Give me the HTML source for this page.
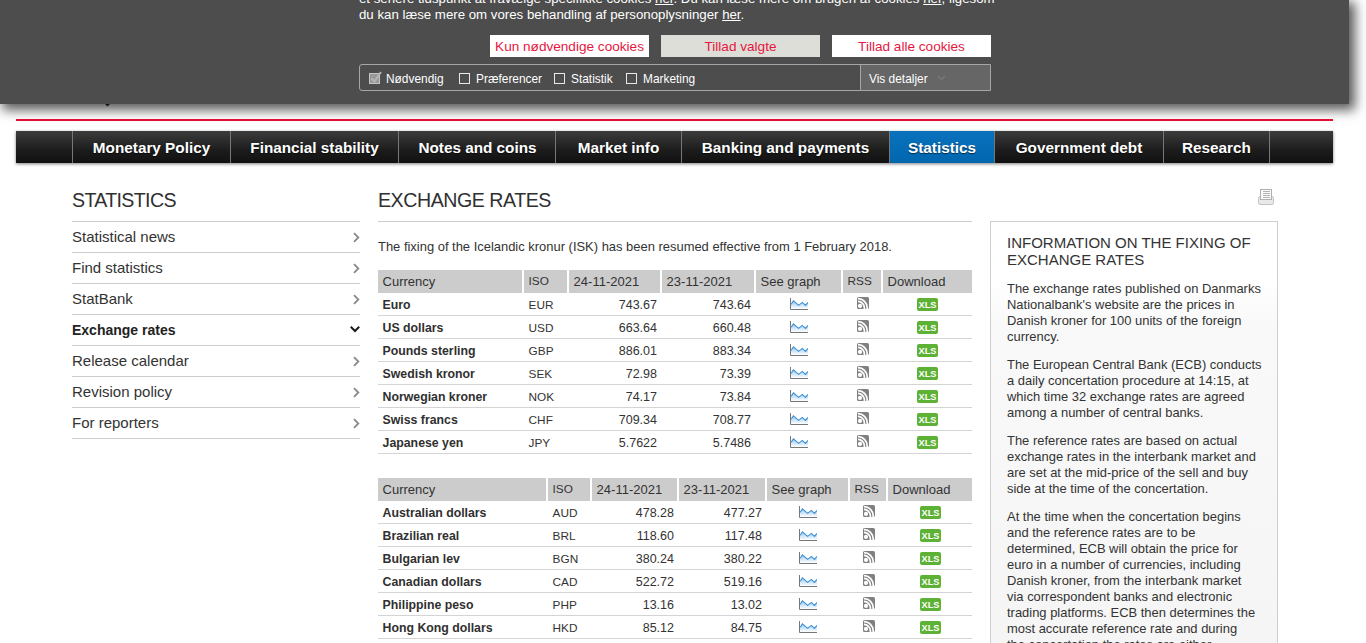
<!DOCTYPE html>
<html><head><meta charset="utf-8"><title>Exchange rates</title>
<style>
*{box-sizing:border-box;margin:0;padding:0}
html,body{width:1366px;height:643px;overflow:hidden;background:#fff}
body{font-family:"Liberation Sans",sans-serif;color:#333;position:relative;font-size:13px}
a{color:inherit}
/* cookie banner */
#ck{position:absolute;left:0;top:0;width:1349px;height:104px;background:#4d4d4d;box-shadow:4px 4px 11px 2px rgba(0,0,0,.65);z-index:10;color:#fff}
#ck .t{position:absolute;left:359px;white-space:nowrap;font-size:13.25px;line-height:16px;color:#fff}
#ck .t u{text-decoration:underline}
#ck .b{position:absolute;top:35px;height:22px;width:159px;background:#fff;color:#e6173f;text-align:center;font-size:13.6px;line-height:23px}
#ck .row{position:absolute;left:359px;top:64px;width:632px;height:27px;border:1px solid #a6a6a6;border-radius:3px 0 0 3px}
#ck .vd{position:absolute;right:0;top:0;width:130px;height:25px;background:#666;border-left:1px solid #a6a6a6;font-size:11.9px;line-height:26px;padding:1px 0 0 8px}
#ck .cb{position:absolute;top:8px;width:11px;height:11px;border:1px solid #e8e8e8;background:#4d4d4d}
#ck .cl{position:absolute;top:1px;font-size:11.9px;line-height:26px;color:#fff}
/* header */
#red{position:absolute;left:16px;top:119px;width:1317px;height:2px;background:#e60f3a}
#nav{position:absolute;left:16px;top:131px;width:1317px;height:32px;background:linear-gradient(#3c3c3c,#1c1c1c 60%,#111);box-shadow:0 1px 3px rgba(0,0,0,.5)}
#nav .i{position:absolute;top:0;height:32px;border-left:1px solid #777;color:#fff;font-weight:bold;font-size:15.3px;line-height:33px;text-align:center;text-shadow:0 1px 1px rgba(0,0,0,.6);white-space:nowrap}
#nav .i.a{background:linear-gradient(#0a72bd,#0066ae)}
h1{position:absolute;font-weight:normal;font-size:19.6px;line-height:24px;color:#303030;white-space:nowrap;letter-spacing:-0.45px}
.hl{position:absolute;height:1px;background:#ccc}
/* sidebar */
#sb{position:absolute;left:72px;top:221px;width:288px}
#sb .it{height:31px;border-top:1px solid #ccc;font-size:15px;line-height:29px;color:#333;position:relative;white-space:nowrap}
#sb .it:last-child{border-bottom:1px solid #ccc;height:32px}
#sb .it.a{font-weight:bold;font-size:14px;color:#222;line-height:31px}
#sb svg{position:absolute;right:0;top:10px}
/* main */
#p1{position:absolute;left:378px;top:239px;font-size:12.95px;line-height:16px;color:#333;white-space:nowrap}
table{position:absolute;left:378px;border-collapse:separate;border-spacing:0;width:594px;table-layout:fixed;font-size:12.5px;color:#333}
th{background:#ccc;font-weight:normal;text-align:left;height:23px;padding:0 0 0 4.6px;border-right:2px solid #fff;font-size:13px;line-height:23px;white-space:nowrap}
th:last-child{border-right:0}
td{height:23px;border-bottom:1px solid #d4d4d4;padding:2px 0 0 4.6px;line-height:20px;white-space:nowrap}
td.i{font-size:11.8px}
th.k{font-size:11.8px}
td.n{font-weight:bold;color:#303030;font-size:12.3px}
td.r{text-align:right;padding:2px 5px 0 0}
td.c{text-align:center;padding:0}
td.c{vertical-align:top}
td.c svg{display:block;margin:5px auto 0}
td.s svg{margin-top:4px}
td.g svg{position:relative;left:-1px}
/* right box */
#rb{position:absolute;left:990px;top:221px;width:288px;height:440px;border:1px solid #cfcfcf;background:linear-gradient(#fff,#fff 60px,#f9f9f9 100px,#f5f5f5);padding:13px 16px}
#rb h2{font-weight:normal;font-size:15px;line-height:17px;color:#333;margin-bottom:13px;margin-top:-1px}
#rb p{font-size:12.95px;line-height:16px;margin-bottom:12px;color:#333;white-space:nowrap}
</style></head><body>

<div id="ck">
 <div class="t" style="top:-9px">et senere tidspunkt at fravælge specifikke cookies <u>her</u>. Du kan læse mere om brugen af cookies <u>her</u>, ligesom</div>
 <div class="t" style="top:7px">du kan læse mere om vores behandling af personoplysninger <u>her</u>.</div>
 <div class="b" style="left:490px;width:159px">Kun nødvendige cookies</div>
 <div class="b" style="left:661px;background:#deded9">Tillad valgte</div>
 <div class="b" style="left:832px">Tillad alle cookies</div>
 <div class="row">
  <div class="cb" style="left:9px;background:#999;border-color:#c4c4c4"></div><svg style="position:absolute;left:9px;top:5px" width="14" height="14" viewBox="0 0 14 14"><path d="M2.5 8.5l3 3L12 2" fill="none" stroke="#b4b4b4" stroke-width="2"/></svg><div class="cl" style="left:26px">Nødvendig</div>
  <div class="cb" style="left:99px"></div><div class="cl" style="left:116px">Præferencer</div>
  <div class="cb" style="left:194px"></div><div class="cl" style="left:211px">Statistik</div>
  <div class="cb" style="left:266px"></div><div class="cl" style="left:283px">Marketing</div>
  <div class="vd">Vis detaljer<svg style="position:absolute;left:76px;top:10px" width="9" height="6" viewBox="0 0 9 6"><path d="M1 1l3.5 3.5L8 1" fill="none" stroke="#777" stroke-width="1.5"/></svg></div>
 </div>
</div>

<div id="red"></div>
<svg style="position:absolute;left:105px;top:104px" width="5" height="3" viewBox="0 0 5 3"><path d="M0 0h5L2.5 2.6z" fill="#333"/></svg>
<div id="nav">
 <div class="i" style="left:56px;width:158px">Monetary Policy</div>
 <div class="i" style="left:214px;width:168px">Financial stability</div>
 <div class="i" style="left:382px;width:158px">Notes and coins</div>
 <div class="i" style="left:539px;width:126px">Market info</div>
 <div class="i" style="left:665px;width:208px">Banking and payments</div>
 <div class="i a" style="left:873px;width:105px">Statistics</div>
 <div class="i" style="left:978px;width:169px">Government debt</div>
 <div class="i" style="left:1147px;width:106px">Research</div>
 <div class="i" style="left:1253px;width:1px"></div>
</div>

<h1 style="left:72px;top:188px;letter-spacing:-0.65px">STATISTICS</h1>
<h1 style="left:378px;top:188px">EXCHANGE RATES</h1>
<div class="hl" style="left:378px;top:221px;width:594px"></div>

<div id="sb">
 <div class="it">Statistical news<svg width="8" height="11" viewBox="0 0 8 11"><path d="M2 1.2l4.3 4.3L2 9.8" fill="none" stroke="#8c8c8c" stroke-width="1.9"/></svg></div>
 <div class="it">Find statistics<svg width="8" height="11" viewBox="0 0 8 11"><path d="M2 1.2l4.3 4.3L2 9.8" fill="none" stroke="#8c8c8c" stroke-width="1.9"/></svg></div>
 <div class="it">StatBank<svg width="8" height="11" viewBox="0 0 8 11"><path d="M2 1.2l4.3 4.3L2 9.8" fill="none" stroke="#8c8c8c" stroke-width="1.9"/></svg></div>
 <div class="it a">Exchange rates<svg width="12" height="8" viewBox="0 0 12 8" style="top:9.5px;right:-1px"><path d="M1.8 1.8l4.2 4.2 4.2-4.2" fill="none" stroke="#1a1a1a" stroke-width="2"/></svg></div>
 <div class="it">Release calendar<svg width="8" height="11" viewBox="0 0 8 11"><path d="M2 1.2l4.3 4.3L2 9.8" fill="none" stroke="#8c8c8c" stroke-width="1.9"/></svg></div>
 <div class="it">Revision policy<svg width="8" height="11" viewBox="0 0 8 11"><path d="M2 1.2l4.3 4.3L2 9.8" fill="none" stroke="#8c8c8c" stroke-width="1.9"/></svg></div>
 <div class="it">For reporters<svg width="8" height="11" viewBox="0 0 8 11"><path d="M2 1.2l4.3 4.3L2 9.8" fill="none" stroke="#8c8c8c" stroke-width="1.9"/></svg></div>
</div>

<div id="p1">The fixing of the Icelandic kronur (ISK) has been resumed effective from 1 February 2018.</div>

<svg width="0" height="0" style="position:absolute">
 <defs>
  <linearGradient id="gg" x1="0" y1="0" x2="0" y2="1"><stop offset="0" stop-color="#9cc8ee"/><stop offset="1" stop-color="#fff"/></linearGradient>
  <symbol id="gr" viewBox="0 0 18 12"><path d="M1 6.2L3.4 2.9 8.6 7.4 12.3 4.4 15.5 7.4 18 4.4V11H1z" fill="url(#gg)"/><path d="M1.2 6.2L3.4 2.9 8.6 7.4 12.3 4.4 15.5 7.4 18 4.4" fill="none" stroke="#3a8fd6" stroke-width="1.1"/><path d="M0.5 0v11.5H18" fill="none" stroke="#777" stroke-width="1"/></symbol>
  <symbol id="xl" viewBox="0 0 21 13"><rect width="21" height="13" rx="2" fill="#5db135"/><text x="10.5" y="9.2" transform="scale(1,1.07)" font-family="Liberation Sans" font-weight="bold" font-size="9.2" fill="#fff" text-anchor="middle">XLS</text></symbol>
  <symbol id="rs" viewBox="0 0 12 12"><rect width="12" height="12" rx="1.6" fill="#808080"/><circle cx="3" cy="8.9" r="2.1" fill="#fff"/><path d="M1 4.4a6.4 6.4 0 0 1 6.4 6.4v1.2M1 1.6a9.2 9.2 0 0 1 9.2 9.2v1.2" fill="none" stroke="#fff" stroke-width="1.7"/></symbol>
 </defs>
</svg>

<table id="t1" style="top:270px">
<colgroup><col style="width:146px"><col style="width:45px"><col style="width:93px"><col style="width:94px"><col style="width:87px"><col style="width:40px"><col style="width:89px"></colgroup>
<tr><th>Currency</th><th class="k">ISO</th><th>24-11-2021</th><th>23-11-2021</th><th>See graph</th><th class="k">RSS</th><th>Download</th></tr>
<tr><td class="n">Euro</td><td class="i">EUR</td><td class="r">743.67</td><td class="r">743.64</td><td class="c g"><svg width="18" height="12"><use href="#gr"/></svg></td><td class="c s"><svg width="12" height="12"><use href="#rs"/></svg></td><td class="c x"><svg width="21" height="13"><use href="#xl"/></svg></td></tr>
<tr><td class="n">US dollars</td><td class="i">USD</td><td class="r">663.64</td><td class="r">660.48</td><td class="c g"><svg width="18" height="12"><use href="#gr"/></svg></td><td class="c s"><svg width="12" height="12"><use href="#rs"/></svg></td><td class="c x"><svg width="21" height="13"><use href="#xl"/></svg></td></tr>
<tr><td class="n">Pounds sterling</td><td class="i">GBP</td><td class="r">886.01</td><td class="r">883.34</td><td class="c g"><svg width="18" height="12"><use href="#gr"/></svg></td><td class="c s"><svg width="12" height="12"><use href="#rs"/></svg></td><td class="c x"><svg width="21" height="13"><use href="#xl"/></svg></td></tr>
<tr><td class="n">Swedish kronor</td><td class="i">SEK</td><td class="r">72.98</td><td class="r">73.39</td><td class="c g"><svg width="18" height="12"><use href="#gr"/></svg></td><td class="c s"><svg width="12" height="12"><use href="#rs"/></svg></td><td class="c x"><svg width="21" height="13"><use href="#xl"/></svg></td></tr>
<tr><td class="n">Norwegian kroner</td><td class="i">NOK</td><td class="r">74.17</td><td class="r">73.84</td><td class="c g"><svg width="18" height="12"><use href="#gr"/></svg></td><td class="c s"><svg width="12" height="12"><use href="#rs"/></svg></td><td class="c x"><svg width="21" height="13"><use href="#xl"/></svg></td></tr>
<tr><td class="n">Swiss francs</td><td class="i">CHF</td><td class="r">709.34</td><td class="r">708.77</td><td class="c g"><svg width="18" height="12"><use href="#gr"/></svg></td><td class="c s"><svg width="12" height="12"><use href="#rs"/></svg></td><td class="c x"><svg width="21" height="13"><use href="#xl"/></svg></td></tr>
<tr><td class="n">Japanese yen</td><td class="i">JPY</td><td class="r">5.7622</td><td class="r">5.7486</td><td class="c g"><svg width="18" height="12"><use href="#gr"/></svg></td><td class="c s"><svg width="12" height="12"><use href="#rs"/></svg></td><td class="c x"><svg width="21" height="13"><use href="#xl"/></svg></td></tr>
</table>

<table id="t2" style="top:478px">
<colgroup><col style="width:170px"><col style="width:44px"><col style="width:87px"><col style="width:88px"><col style="width:83px"><col style="width:38px"><col style="width:84px"></colgroup>
<tr><th>Currency</th><th class="k">ISO</th><th>24-11-2021</th><th>23-11-2021</th><th>See graph</th><th class="k">RSS</th><th>Download</th></tr>
<tr><td class="n">Australian dollars</td><td class="i">AUD</td><td class="r">478.28</td><td class="r">477.27</td><td class="c g"><svg width="18" height="12"><use href="#gr"/></svg></td><td class="c s"><svg width="12" height="12"><use href="#rs"/></svg></td><td class="c x"><svg width="21" height="13"><use href="#xl"/></svg></td></tr>
<tr><td class="n">Brazilian real</td><td class="i">BRL</td><td class="r">118.60</td><td class="r">117.48</td><td class="c g"><svg width="18" height="12"><use href="#gr"/></svg></td><td class="c s"><svg width="12" height="12"><use href="#rs"/></svg></td><td class="c x"><svg width="21" height="13"><use href="#xl"/></svg></td></tr>
<tr><td class="n">Bulgarian lev</td><td class="i">BGN</td><td class="r">380.24</td><td class="r">380.22</td><td class="c g"><svg width="18" height="12"><use href="#gr"/></svg></td><td class="c s"><svg width="12" height="12"><use href="#rs"/></svg></td><td class="c x"><svg width="21" height="13"><use href="#xl"/></svg></td></tr>
<tr><td class="n">Canadian dollars</td><td class="i">CAD</td><td class="r">522.72</td><td class="r">519.16</td><td class="c g"><svg width="18" height="12"><use href="#gr"/></svg></td><td class="c s"><svg width="12" height="12"><use href="#rs"/></svg></td><td class="c x"><svg width="21" height="13"><use href="#xl"/></svg></td></tr>
<tr><td class="n">Philippine peso</td><td class="i">PHP</td><td class="r">13.16</td><td class="r">13.02</td><td class="c g"><svg width="18" height="12"><use href="#gr"/></svg></td><td class="c s"><svg width="12" height="12"><use href="#rs"/></svg></td><td class="c x"><svg width="21" height="13"><use href="#xl"/></svg></td></tr>
<tr><td class="n">Hong Kong dollars</td><td class="i">HKD</td><td class="r">85.12</td><td class="r">84.75</td><td class="c g"><svg width="18" height="12"><use href="#gr"/></svg></td><td class="c s"><svg width="12" height="12"><use href="#rs"/></svg></td><td class="c x"><svg width="21" height="13"><use href="#xl"/></svg></td></tr>
<tr><td class="n">Hungarian forints</td><td class="i">HUF</td><td class="r">2.0186</td><td class="r">2.0150</td><td class="c g"><svg width="18" height="12"><use href="#gr"/></svg></td><td class="c s"><svg width="12" height="12"><use href="#rs"/></svg></td><td class="c x"><svg width="21" height="13"><use href="#xl"/></svg></td></tr>
</table>

<svg style="position:absolute;left:1257px;top:188px" width="18" height="18" viewBox="0 0 18 18"><rect x="1.5" y="8.5" width="15" height="8" rx="1.8" fill="#e9e9ea" stroke="#c2c2c2"/><rect x="3.5" y="1.5" width="11" height="10" fill="#fafafa" stroke="#b0b0b0"/><path d="M5.5 3.5h7M5.5 5.5h7M5.5 7.5h7M5.5 9.5h7" stroke="#b4b4b4" stroke-width="1" shape-rendering="crispEdges"/></svg>

<div id="rb">
 <h2>INFORMATION ON THE FIXING OF<br>EXCHANGE RATES</h2>
 <p>The exchange rates published on Danmarks<br>Nationalbank's website are the prices in<br>Danish kroner for 100 units of the foreign<br>currency.</p>
 <p>The European Central Bank (ECB) conducts<br>a daily concertation procedure at 14:15, at<br>which time 32 exchange rates are agreed<br>among a number of central banks.</p>
 <p>The reference rates are based on actual<br>exchange rates in the interbank market and<br>are set at the mid-price of the sell and buy<br>side at the time of the concertation.</p>
 <p>At the time when the concertation begins<br>and the reference rates are to be<br>determined, ECB will obtain the price for<br>euro in a number of currencies, including<br>Danish kroner, from the interbank market<br>via correspondent banks and electronic<br>trading platforms. ECB then determines the<br>most accurate reference rate and during<br>the concertation the rates are either</p>
</div>

</body></html>
